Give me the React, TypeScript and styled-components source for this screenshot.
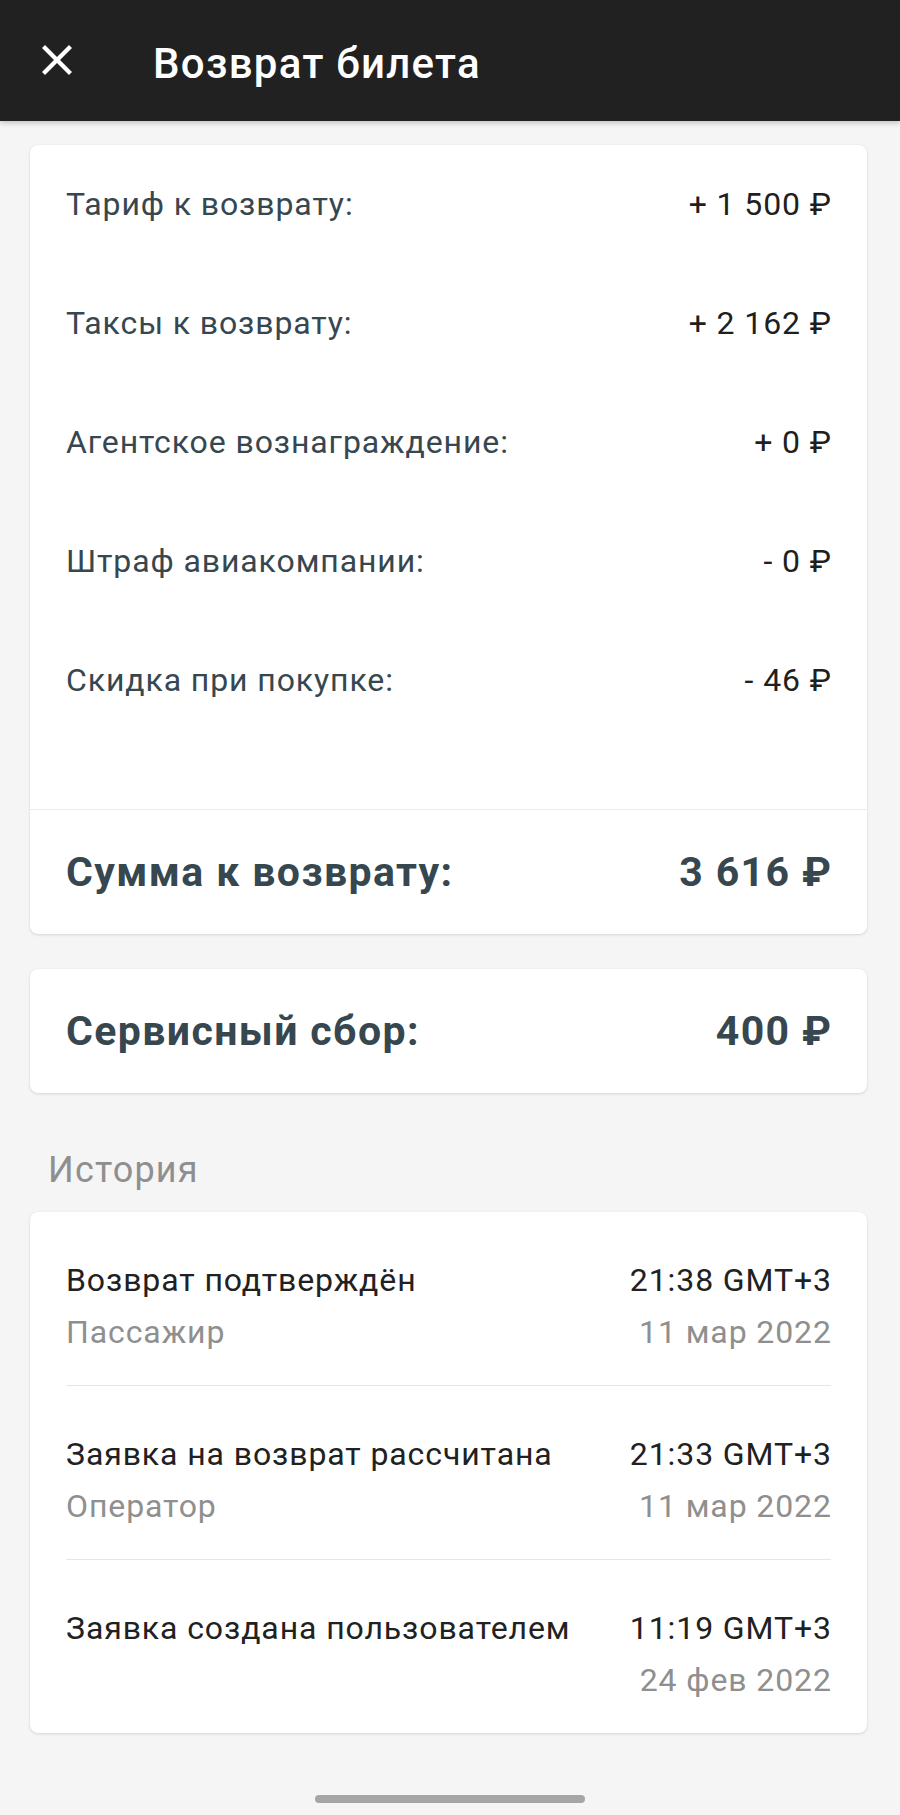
import React from "react";
import styled, { createGlobalStyle } from "styled-components";

const GlobalStyle = createGlobalStyle`
  html, body {
    margin: 0;
    padding: 0;
    background: #f5f5f5;
  }
  body {
    font-family: "Roboto", "Noto Sans", "Liberation Sans", sans-serif;
    -webkit-font-smoothing: antialiased;
  }
  * { box-sizing: border-box; }
`;

const Screen = styled.div`
  width: 900px;
  min-height: 1815px;
  background: #f5f5f5;
  display: flex;
  flex-direction: column;
`;

const TopBar = styled.header`
  height: 121px;
  background: #212121;
  display: flex;
  align-items: center;
  padding: 6px 0 0 42px;
  box-shadow: 0 2px 5px rgba(0, 0, 0, 0.22);
  position: relative;
  z-index: 1;
`;

const CloseButton = styled.button`
  width: 30px;
  height: 30px;
  padding: 0;
  border: 0;
  background: transparent;
  margin-bottom: 7px;
  display: flex;
  align-items: center;
  justify-content: center;
  cursor: pointer;
`;

const Title = styled.h1`
  margin: 0 0 0 81px;
  font-size: 42px;
  line-height: 47px;
  letter-spacing: 1.3px;
  font-weight: 500;
  color: #ffffff;
`;

const Content = styled.main`
  display: flex;
  flex-direction: column;
  padding: 24px 33px 0 30px;
`;

const Card = styled.section<{ $gap?: number }>`
  background: #ffffff;
  border-radius: 8px;
  box-shadow: 0 1px 3px rgba(0, 0, 0, 0.13), 0 0 1px rgba(0, 0, 0, 0.06);
  margin-top: ${(p) => p.$gap ?? 0}px;
  display: flex;
  flex-direction: column;
  overflow: hidden;
`;

const Breakdown = styled.div`
  display: flex;
  flex-direction: column;
  padding-bottom: 69px;
`;

const LineRow = styled.div`
  height: 119px;
  padding: 0 36px;
  display: flex;
  align-items: center;
  justify-content: space-between;
  font-size: 32px;
  letter-spacing: 0.9px;
  line-height: 119px;
`;

const LineLabel = styled.span`
  color: #37474f;
`;

const LineValue = styled.span`
  color: #1f1f1f;
  margin-right: -0.9px;
`;

const FullDivider = styled.div`
  height: 1px;
  background: #ebebeb;
`;

const TotalRow = styled.div`
  height: 124px;
  padding: 0 36px;
  display: flex;
  align-items: center;
  justify-content: space-between;
  font-size: 41px;
  letter-spacing: 1.4px;
  line-height: 124px;
  font-weight: 700;
  color: #37474f;
`;

const TotalValue = styled.span`
  margin-right: -1.4px;
`;

const SectionTitle = styled.h2`
  margin: 57px 0 0 18px;
  font-size: 36px;
  letter-spacing: 1.2px;
  line-height: 40px;
  font-weight: 400;
  color: #8f8f8f;
`;

const HistoryList = styled.div`
  display: flex;
  flex-direction: column;
  padding: 0 36px;
`;

const HistoryItem = styled.div`
  display: grid;
  grid-template-columns: 1fr auto;
  grid-auto-rows: 52px;
  column-gap: 24px;
  padding: 42px 0 27px;
  font-size: 32px;
  letter-spacing: 0.9px;
  line-height: 52px;
  & + & {
    border-top: 1px solid #e6e6e6;
  }
`;

const EventText = styled.span<{ $muted?: boolean; $right?: boolean }>`
  color: ${(p) => (p.$muted ? "#8f8f8f" : "#212121")};
  text-align: ${(p) => (p.$right ? "right" : "left")};
  margin-right: ${(p) => (p.$right ? "-0.9px" : "0")};
  white-space: nowrap;
`;

const HomeIndicator = styled.div`
  align-self: center;
  width: 270px;
  height: 8px;
  border-radius: 4px;
  background: #a6a6a6;
  margin: 62px 0 12px;
`;

const CloseIcon = () => (
  <svg width="30" height="30" viewBox="5 5 14 14" aria-hidden="true">
    <path
      fill="#ffffff"
      d="M19 6.41L17.59 5 12 10.59 6.41 5 5 6.41 10.59 12 5 17.59 6.41 19 12 13.41 17.59 19 19 17.59 13.41 12z"
    />
  </svg>
);

const lines = [
  { label: "Тариф к возврату:", value: "+ 1 500 ₽" },
  { label: "Таксы к возврату:", value: "+ 2 162 ₽" },
  { label: "Агентское вознаграждение:", value: "+ 0 ₽" },
  { label: "Штраф авиакомпании:", value: "- 0 ₽" },
  { label: "Скидка при покупке:", value: "- 46 ₽" },
];

const history = [
  { title: "Возврат подтверждён", who: "Пассажир", time: "21:38 GMT+3", date: "11 мар 2022" },
  { title: "Заявка на возврат рассчитана", who: "Оператор", time: "21:33 GMT+3", date: "11 мар 2022" },
  { title: "Заявка создана пользователем", who: "", time: "11:19 GMT+3", date: "24 фев 2022" },
];

export default function App() {
  return (
    <>
      <GlobalStyle />
      <Screen>
        <TopBar>
          <CloseButton aria-label="Закрыть">
            <CloseIcon />
          </CloseButton>
          <Title>Возврат билета</Title>
        </TopBar>
        <Content>
          <Card>
            <Breakdown>
              {lines.map((l) => (
                <LineRow key={l.label}>
                  <LineLabel>{l.label}</LineLabel>
                  <LineValue>{l.value}</LineValue>
                </LineRow>
              ))}
            </Breakdown>
            <FullDivider />
            <TotalRow>
              <span>Сумма к возврату:</span>
              <TotalValue>3 616 ₽</TotalValue>
            </TotalRow>
          </Card>
          <Card $gap={35}>
            <TotalRow>
              <span>Сервисный сбор:</span>
              <TotalValue>400 ₽</TotalValue>
            </TotalRow>
          </Card>
          <SectionTitle>История</SectionTitle>
          <Card $gap={22}>
            <HistoryList>
              {history.map((h) => (
                <HistoryItem key={h.title}>
                  <EventText>{h.title}</EventText>
                  <EventText $right>{h.time}</EventText>
                  <EventText $muted>{h.who}</EventText>
                  <EventText $muted $right>{h.date}</EventText>
                </HistoryItem>
              ))}
            </HistoryList>
          </Card>
        </Content>
        <HomeIndicator />
      </Screen>
    </>
  );
}
